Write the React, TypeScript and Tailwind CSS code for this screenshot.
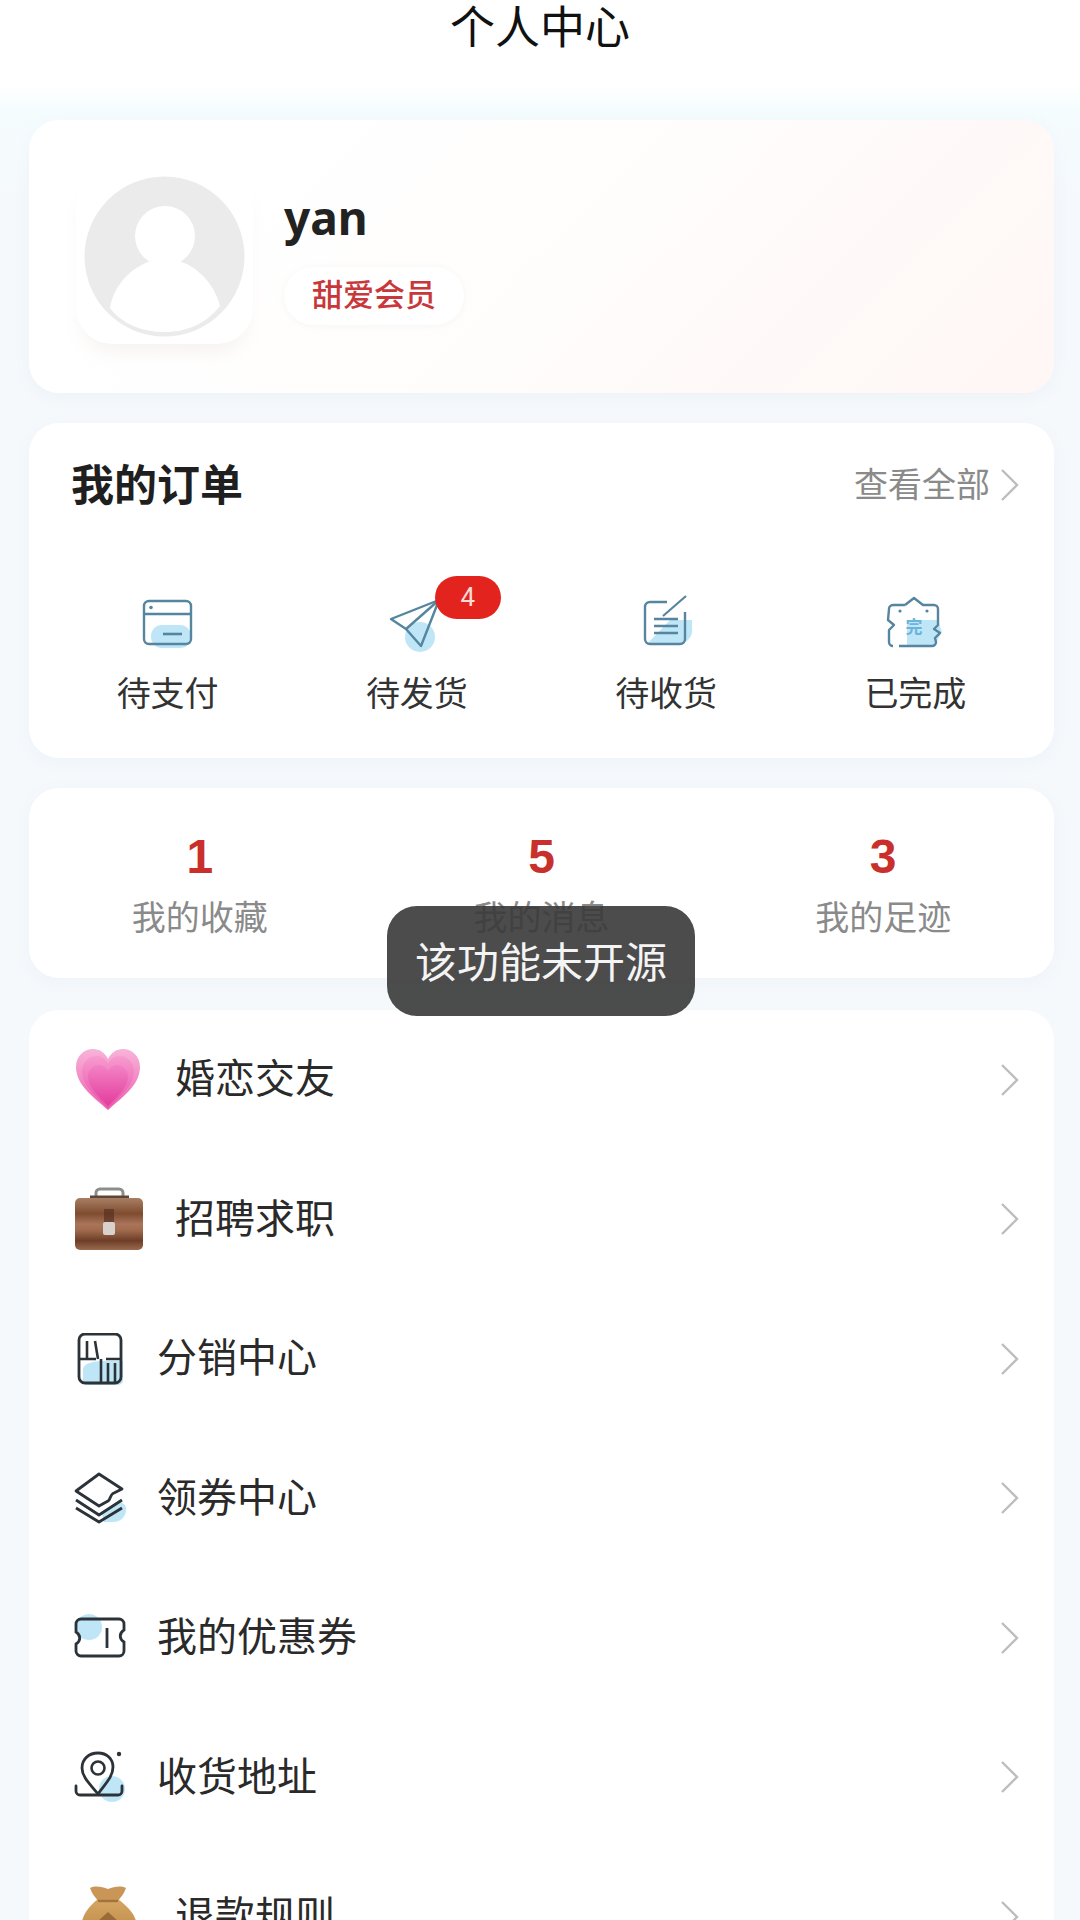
import React from "react";

const cjk = "font-['Noto_Sans_CJK_SC','Noto_Sans',sans-serif]";
const line = "#55859f";
const dark = "#2b3238";
const blob = "#bfe6f7";

function Chevron() {
  return (
    <svg width="22" height="36" viewBox="0 0 22 36" fill="none" className="shrink-0">
      <path d="M3 3 L18 18 L3 33" stroke="#bdbdbd" strokeWidth="2.4" />
    </svg>
  );
}

function CardIcon() {
  return (
    <svg width="60" height="60" viewBox="0 0 60 60" fill="none">
      <rect x="13" y="33" width="40" height="23" rx="11" fill={blob} />
      <rect x="6" y="9" width="47" height="43" rx="5" stroke={line} strokeWidth="2.4" />
      <path d="M6 22 H53" stroke={line} strokeWidth="2.4" />
      <circle cx="13" cy="15.5" r="1.8" fill={line} />
      <path d="M25 42 H44" stroke={line} strokeWidth="2.6" />
    </svg>
  );
}

function PlaneIcon() {
  return (
    <svg width="60" height="60" viewBox="0 0 60 60" fill="none">
      <circle cx="33" cy="45" r="15" fill={blob} />
      <path d="M4 27 L52 8 L34 54 L19 37 Z" stroke={line} strokeWidth="2.4" strokeLinejoin="round" />
      <path d="M52 8 L19 37" stroke={line} strokeWidth="2.4" />
    </svg>
  );
}

function NoteIcon() {
  return (
    <svg width="60" height="60" viewBox="0 0 60 60" fill="none">
      <path d="M11 52 H44 A14 14 0 0 0 56 36 V28 H34 Z" fill={blob} />
      <path d="M31 10 H14 A5 5 0 0 0 9 15 V47 A5 5 0 0 0 14 52 H44 A5 5 0 0 0 49 47 V20" stroke={line} strokeWidth="2.4" />
      <path d="M27 24 L50 4" stroke={line} strokeWidth="2.2" />
      <path d="M18 27 H42 M18 34 H42 M18 41 H42" stroke={line} strokeWidth="2.4" />
    </svg>
  );
}

function TagIcon() {
  return (
    <svg width="60" height="60" viewBox="0 0 60 60" fill="none">
      <path d="M22 28 H53 L57 40 L53 47 L50 54 H22 Z" fill={blob} />
      <path d="M20 13 L29 6 L38 13 H49 A4 4 0 0 1 53 17 V33 L49 37 L55 41 L50 46 L51 50 A4 4 0 0 1 47 54 H14 M8 54 A4 4 0 0 1 4 50 V38 L9 33 L3 28 L4 17 A4 4 0 0 1 8 13 H20" stroke={line} strokeWidth="2.4" strokeLinejoin="round" />
      <circle cx="15" cy="19" r="1.6" fill={line} />
      <circle cx="42" cy="19" r="1.6" fill={line} />
      <text x="29" y="41" textAnchor="middle" fontSize="17" fontWeight="700" fill="#6bb4dc">完</text>
    </svg>
  );
}

function HeartEmoji() {
  return (
    <svg width="68" height="64" viewBox="0 0 68 64">
      <defs>
        <linearGradient id="h1" x1="0" y1="0" x2="0" y2="1">
          <stop offset="0" stopColor="#f7b4d9" />
          <stop offset="1" stopColor="#ee5fb0" />
        </linearGradient>
        <linearGradient id="h2" x1="0" y1="0" x2="0" y2="1">
          <stop offset="0" stopColor="#f79bcf" />
          <stop offset="1" stopColor="#e94fa8" />
        </linearGradient>
        <linearGradient id="h3" x1="0" y1="0" x2="0" y2="1">
          <stop offset="0" stopColor="#f382c5" />
          <stop offset="1" stopColor="#e23c9c" />
        </linearGradient>
      </defs>
      <path d="M34 62 C22 51 2 38 2 19 C2 8 10 1 19 1 C26 1 31 5 34 11 C37 5 42 1 49 1 C58 1 66 8 66 19 C66 38 46 51 34 62 Z" fill="url(#h1)" />
      <path d="M34 60 C24 50 8 38 8 24 C8 14 15 8 23 8 C28 8 32 11 34 16 C36 11 40 8 45 8 C53 8 60 14 60 24 C60 38 44 50 34 60 Z" fill="url(#h2)" />
      <path d="M34 58 C26 50 14 39 14 29 C14 21 20 17 25 17 C29 17 32 19 34 23 C36 19 39 17 43 17 C48 17 54 21 54 29 C54 39 42 50 34 58 Z" fill="url(#h3)" />
    </svg>
  );
}

function BagEmoji() {
  return (
    <svg width="70" height="64" viewBox="0 0 70 64">
      <defs>
        <linearGradient id="b1" x1="0" y1="0" x2="0" y2="1">
          <stop offset="0" stopColor="#a87f63" />
          <stop offset="0.3" stopColor="#7f4c30" />
          <stop offset="0.5" stopColor="#a9745a" />
          <stop offset="0.62" stopColor="#a06b4d" />
          <stop offset="0.82" stopColor="#6d3d28" />
          <stop offset="1" stopColor="#9a6a4d" />
        </linearGradient>
      </defs>
      <path d="M22 10 V6 A4 4 0 0 1 26 2 H45 A4 4 0 0 1 49 6 V10" fill="none" stroke="#8b8f8c" strokeWidth="3" />
      <path d="M16 10 H55" stroke="#5e4636" strokeWidth="3" />
      <rect x="1" y="11" width="68" height="52" rx="5" fill="url(#b1)" />
      <rect x="30" y="22" width="10" height="14" fill="#4e2c1c" opacity="0.6" />
      <rect x="29" y="35" width="12" height="13" rx="2" fill="#d9d2cc" />
    </svg>
  );
}

function MoneyBagEmoji() {
  return (
    <svg width="68" height="64" viewBox="0 0 68 64" className="self-start">
      <defs>
        <linearGradient id="m1" x1="0" y1="0" x2="0" y2="1">
          <stop offset="0" stopColor="#d6a662" />
          <stop offset="1" stopColor="#b57f3f" />
        </linearGradient>
      </defs>
      <path d="M24 14 C16 20 10 28 8 36 V64 H62 V36 C60 28 52 20 44 14 Z" fill="url(#m1)" />
      <path d="M16 3 C22 0 28 2 34 4 C40 2 46 0 52 3 C50 9 46 13 44 16 H24 C22 13 18 9 16 3 Z" fill="#c99658" />
      <path d="M24 16 H44" stroke="#8f6230" strokeWidth="2.4" opacity="0.7" />
      <path d="M24 36 L34 27 L44 36 Z" fill="#8a5c2c" opacity="0.75" />
    </svg>
  );
}

function DistIcon() {
  return (
    <svg width="52" height="52" viewBox="0 0 52 52" fill="none">
      <path d="M9 37 C9 30 20 28 30 28 H49 V46 A5 5 0 0 1 44 52 H14 A5 5 0 0 1 9 46 Z" fill={blob} />
      <rect x="5" y="1" width="42" height="49" rx="6" stroke={dark} strokeWidth="2.8" />
      <path d="M5 26 H22 M32 26 H47 M13 8 V26 M21 8 L24 26 M34 30 V50 M41 30 V50 M27 26 V50" stroke={dark} strokeWidth="2.6" />
    </svg>
  );
}

function LayerIcon() {
  return (
    <svg width="52" height="52" viewBox="0 0 52 52" fill="none">
      <path d="M28 42 L46 30 A7 7 0 0 1 52 38 C52 45 46 50 40 50 H30 Z" fill={blob} />
      <path d="M25 2 L48 17 L40 21 C36 22 37 27 34 29 L25 34 L2 19 Z" stroke={dark} strokeWidth="2.8" strokeLinejoin="round" />
      <path d="M2 28 L25 43 L48 28 M2 36 L25 50 L48 36" stroke={dark} strokeWidth="2.8" strokeLinejoin="round" />
    </svg>
  );
}

function TicketIcon() {
  return (
    <svg width="52" height="52" viewBox="0 0 52 52" fill="none">
      <circle cx="15" cy="15" r="13" fill={blob} />
      <path d="M7 7 H45 A5 5 0 0 1 50 12 V18 C45 21 45 27 50 30 V39 A5 5 0 0 1 45 44 H7 A5 5 0 0 1 2 39 V32 C7 29 7 23 2 20 V12 A5 5 0 0 1 7 7 Z" stroke={dark} strokeWidth="2.8" />
      <path d="M33 16 V36" stroke={dark} strokeWidth="2.8" />
    </svg>
  );
}

function MapIcon() {
  return (
    <svg width="52" height="52" viewBox="0 0 52 52" fill="none">
      <circle cx="38" cy="38" r="13" fill={blob} />
      <path d="M24 43 C16 33 8 26 8 17 C8 8 15 2 24 2 C33 2 39 8 39 16 C39 26 31 33 24 43 Z" stroke={dark} strokeWidth="2.8" />
      <circle cx="24" cy="17" r="6.5" stroke={dark} strokeWidth="2.6" />
      <circle cx="45" cy="3" r="2.2" fill={dark} />
      <path d="M2 35 V40 A4 4 0 0 0 6 44 H44 A4 4 0 0 0 48 40 V35" stroke={dark} strokeWidth="2.8" strokeLinecap="round" />
    </svg>
  );
}

const orders = [
  { label: "待支付", icon: <CardIcon /> },
  { label: "待发货", icon: <PlaneIcon />, badge: "4" },
  { label: "待收货", icon: <NoteIcon /> },
  { label: "已完成", icon: <TagIcon /> },
];

const stats = [
  { n: "1", label: "我的收藏" },
  { n: "5", label: "我的消息" },
  { n: "3", label: "我的足迹" },
];

const rows = [
  { label: "婚恋交友", icon: <HeartEmoji />, big: true },
  { label: "招聘求职", icon: <BagEmoji />, big: true },
  { label: "分销中心", icon: <DistIcon /> },
  { label: "领券中心", icon: <LayerIcon /> },
  { label: "我的优惠券", icon: <TicketIcon /> },
  { label: "收货地址", icon: <MapIcon /> },
  { label: "退款规则", icon: <MoneyBagEmoji />, big: true },
];

export default function App() {
  return (
    <div className={`relative h-[1920px] w-[1080px] overflow-hidden bg-[linear-gradient(#ffffff_84px,#f5fcfe_110px,#f5f9fc_200px)] ${cjk}`}>
      <header className="flex h-[88px] items-start justify-center">
        <h1 className="text-[45px] leading-[50px] font-normal text-[#111]">个人中心</h1>
      </header>

      <main className="flex flex-col pt-[32px] pr-[26px] pl-[29px]">
        <section className="flex h-[273px] items-center rounded-[30px] bg-[linear-gradient(135deg,#ffffff_20%,#fffdfc_53%,#fef9f8_74%,#fff7f6)] pl-[47px] shadow-[0_4px_16px_rgba(120,140,170,0.06)]">
          <div className="flex h-[175px] w-[177px] items-center justify-center rounded-[36px] bg-white shadow-[0_14px_20px_-8px_rgba(190,160,150,0.16)]">
            <svg width="161" height="161" viewBox="0 0 161 161">
              <circle cx="80.5" cy="80.5" r="80" fill="#ebebeb" />
              <circle cx="81" cy="60" r="30" fill="#fff" />
              <path d="M26 132 C30 105 55 83 81 83 C107 83 130 105 136 130 C122 148 102 156 81 156 C58 156 38 148 26 132 Z" fill="#fff" />
            </svg>
          </div>
          <div className="ml-[31px] flex flex-col items-start">
            <div className="font-['Noto_Sans',sans-serif] text-[46px] leading-[58px] font-bold text-[#222]">yan</div>
            <div className="mt-[21px] flex h-[58px] w-[180px] items-center justify-center rounded-[29px] bg-white pb-[6px] text-[31px] font-medium text-[#c8383a] shadow-[0_1px_6px_rgba(200,170,160,0.12)]">
              甜爱会员
            </div>
          </div>
        </section>

        <section className="mt-[30px] h-[335px] rounded-[30px] bg-white shadow-[0_4px_16px_rgba(120,140,170,0.05)]">
          <div className="flex h-[124px] items-center justify-between pr-[33px] pl-[42px]">
            <h2 className="pb-[5px] text-[43px] font-bold text-[#1f1f1f]">我的订单</h2>
            <div className="flex items-center gap-[9px] text-[34px] text-[#8a8a8a]">
              <span className="pb-[5px]">查看全部</span>
              <Chevron />
            </div>
          </div>
          <div className="mt-[45px] grid grid-cols-4 pr-[14px] pl-[14px]">
            {orders.map((o) => (
              <div key={o.label} className="flex flex-col items-center">
                <div className="relative h-[60px] w-[60px]">
                  {o.icon}
                  {o.badge && (
                    <span className="absolute top-[-16px] left-[48px] flex h-[43px] w-[66px] items-center justify-center rounded-[22px] bg-[#e3231d] font-['Roboto',sans-serif] text-[26px] text-[#fbdcd8]">
                      {o.badge}
                    </span>
                  )}
                </div>
                <div className="mt-[17px] text-[34px] leading-[46px] text-[#333]">{o.label}</div>
              </div>
            ))}
          </div>
        </section>

        <section className="mt-[30px] grid h-[190px] grid-cols-3 rounded-[30px] bg-white pt-[39px] shadow-[0_4px_16px_rgba(120,140,170,0.05)]">
          {stats.map((s) => (
            <div key={s.n} className="flex flex-col items-center">
              <div className="font-['Liberation_Sans',sans-serif] text-[48px] leading-[60px] font-bold text-[#c9302c]">{s.n}</div>
              <div className="mt-[6px] text-[34px] leading-[46px] text-[#8a8a8a]">{s.label}</div>
            </div>
          ))}
        </section>

        <section className="mt-[32px] rounded-[30px] bg-white">
          {rows.map((r) => (
            <div key={r.label} className="flex h-[139.5px] items-center pr-[33px] pl-[45px]">
              <div className={`flex shrink-0 items-center justify-start ${r.big ? "w-[101px]" : "w-[83px]"}`}>{r.icon}</div>
              <div className="flex-1 pb-[7px] text-[40px] text-[#2a2a2a]">{r.label}</div>
              <Chevron />
            </div>
          ))}
        </section>
      </main>

      <div className="absolute top-[906px] left-[387px] flex h-[110px] w-[308px] items-center justify-center rounded-[30px] bg-[rgba(56,56,56,0.9)] pb-[4px] text-[42px] text-[#f4f4f4]">
        该功能未开源
      </div>
    </div>
  );
}
